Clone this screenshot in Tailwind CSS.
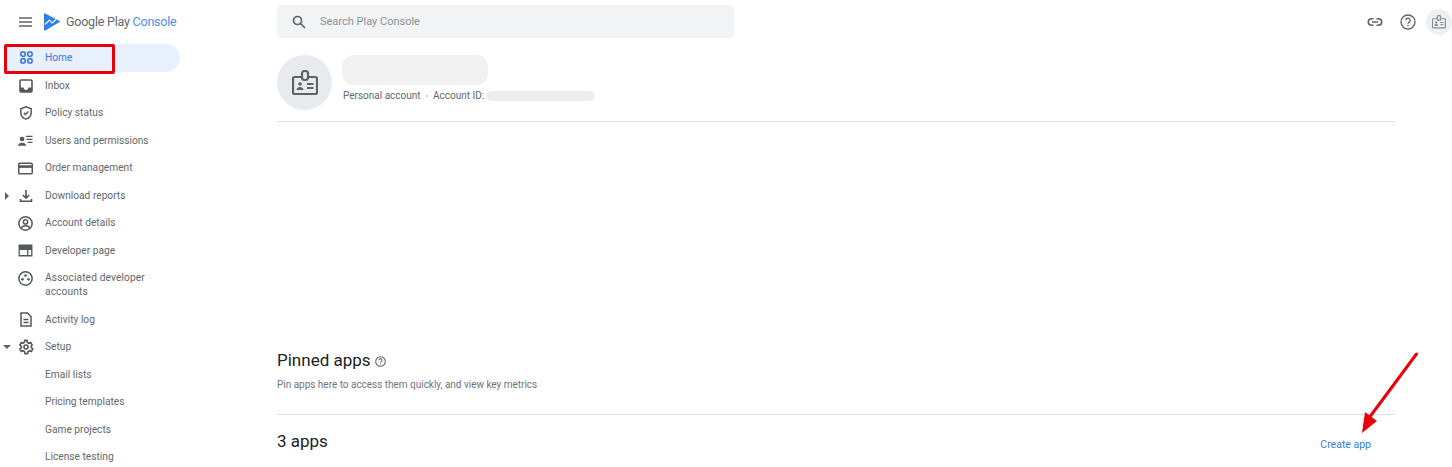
<!DOCTYPE html>
<html lang="en">
  <head>
    <meta charset="UTF-8" />
    <title>Google Play Console</title>
    <script src="https://cdn.jsdelivr.net/npm/@tailwindcss/browser@4"></script>
  </head>
  <body class="relative h-[467px] w-[1452px] overflow-hidden bg-white font-['Roboto',sans-serif] text-[#63676b]">
    <div class="flex h-full">
      <!-- sidebar -->
      <aside class="w-[277px] shrink-0">
        <div class="flex h-[44px] items-center pl-[19px]">
          <svg class="h-[12px] w-[13px]" viewBox="0 0 13 12" fill="none" stroke="#5f6368" stroke-width="1.300"><path d="M0 2h13M0 6h13M0 10h13" /></svg>
          <svg class="ml-[12px] h-[18px] w-[17px]" viewBox="0 0 17 18"><path d="M1.200.4 16.500 8.600 1.200 17.400a.8.800 0 0 1-1.200-.7V1.100A.8.800 0 0 1 1.200.4Z" fill="#2f80e8" /><path d="M1 11.500 5.500 7l2.500 3 4-3.500" fill="none" stroke="#fff" stroke-width="1.100" /></svg>
          <span class="ml-[5px] text-[12.5px] tracking-[-0.22px] whitespace-nowrap">Google Play <span class="text-[#4a8fe8]">Console</span></span>
        </div>
        <nav class="w-[180px] text-[10.2px]">
          <a class="ml-[5px] flex h-[27.75px] items-center rounded-r-full bg-[#e8f0fe] pl-[15px] text-[#3b78d8]">
            <svg class="h-[13px] w-[13px]" viewBox="0 0 14 14" fill="none" stroke="#2f6fd6" stroke-width="1.700"><rect x="1" y="1" width="4.600" height="4.600" rx="1.600" /><rect x="8.400" y="1" width="4.600" height="4.600" rx="1.600" /><rect x="1" y="8.400" width="4.600" height="4.600" rx="1.600" /><rect x="8.400" y="8.400" width="4.600" height="4.600" rx="1.600" /></svg>
            <span class="ml-[12px]">Home</span>
          </a>
          <a class="flex h-[27.5px] items-center pl-[19px]">
            <svg class="h-[14px] w-[14px]" viewBox="0 0 14 14" fill="none" stroke="#54585c" stroke-width="1.600"><rect x="1" y="1" width="12" height="12" rx="1.200" /><path d="M1 8.500h3.500a2.500 2.500 0 0 0 5 0H13V13H1Z" fill="#54585c" stroke="none" /></svg>
            <span class="ml-[12px]">Inbox</span>
          </a>
          <a class="flex h-[27.5px] items-center pl-[19px]">
            <svg class="h-[14px] w-[14px]" viewBox="0 0 14 14" fill="none" stroke="#54585c" stroke-width="1.500"><path d="M7 .800 1.800 2.700v3.700c0 3.100 2.200 5.800 5.200 6.700 3-.9 5.200-3.600 5.200-6.700V2.700Z" /><path d="m4.800 6.900 1.600 1.600 2.900-3" /></svg>
            <span class="ml-[12px]">Policy status</span>
          </a>
          <a class="flex h-[27.5px] items-center pl-[18px]">
            <svg class="h-[15px] w-[15px]" viewBox="0 0 14 14" fill="#54585c"><circle cx="3.800" cy="5.600" r="2.200" /><path d="M0 12c0-2 2-3 3.800-3s3.800 1 3.800 3Z" /><path d="M7.500 2.500h6v1.300h-6zM8 5.300h5.500v1.300H8zM9 8.100h4.500v1.300H9z" /></svg>
            <span class="ml-[12px]">Users and permissions</span>
          </a>
          <a class="flex h-[27.5px] items-center pl-[18px]">
            <svg class="h-[15px] w-[15px]" viewBox="0 0 14 14" fill="none" stroke="#54585c" stroke-width="1.400"><rect x=".7" y="2" width="12.600" height="10" rx="1" /><path d="M.7 5.200h12.600" stroke-width="2.400" /></svg>
            <span class="ml-[12px]">Order management</span>
          </a>
          <a class="relative flex h-[27.5px] items-center pl-[19px]">
            <span class="absolute top-[10px] left-[5px] h-0 w-0 border-y-[4px] border-l-[4px] border-y-transparent border-l-[#5f6368]"></span>
            <svg class="h-[14px] w-[14px]" viewBox="0 0 14 14" fill="none" stroke="#54585c" stroke-width="1.600"><path d="M7 1v8M3.800 6 7 9.200 10.200 6M1.500 10v2.300h11V10" /></svg>
            <span class="ml-[12px]">Download reports</span>
          </a>
          <a class="flex h-[27.5px] items-center pl-[18px]">
            <svg class="h-[15px] w-[15px]" viewBox="0 0 14 14" fill="none" stroke="#54585c" stroke-width="1.400"><circle cx="7" cy="7" r="6.200" /><circle cx="7" cy="5.500" r="2" /><path d="M3 11c1-1.500 2.500-2 4-2s3 .5 4 2" /></svg>
            <span class="ml-[12px]">Account details</span>
          </a>
          <a class="flex h-[27.5px] items-center pl-[18px]">
            <svg class="h-[15px] w-[15px]" viewBox="0 0 14 14" fill="#54585c"><path fill-rule="evenodd" d="M.5 1.500h13v11H.5ZM1.700 6.500v4.800h6.800V6.500Zm8 0v4.800h2.600V6.500Z" /></svg>
            <span class="ml-[12px]">Developer page</span>
          </a>
          <a class="flex h-[41.5px] items-start pt-[7px] pl-[18px] leading-[14px]">
            <svg class="h-[15px] w-[15px]" viewBox="0 0 14 14" fill="none" stroke="#54585c" stroke-width="1.400"><circle cx="7" cy="7" r="6.200" /><circle cx="7" cy="4.200" r="1.200" fill="#54585c" stroke="none" /><circle cx="4.200" cy="7.800" r="1.200" fill="#54585c" stroke="none" /><circle cx="9.800" cy="7.800" r="1.200" fill="#54585c" stroke="none" /></svg>
            <span class="ml-[12px] w-[110px] tracking-[0.12px]">Associated developer accounts</span>
          </a>
          <a class="flex h-[27.5px] items-center pl-[19px]">
            <svg class="h-[15px] w-[14px]" viewBox="0 0 14 15" fill="none" stroke="#54585c" stroke-width="1.500"><path d="M2 1h6.500L12 4.500V14H2Z" /><path d="M4.500 7.500h5M4.500 10.500h5" /></svg>
            <span class="ml-[12px]">Activity log</span>
          </a>
          <a class="relative flex h-[27.5px] items-center pl-[18px]">
            <span class="absolute top-[12px] left-[3px] h-0 w-0 border-x-[4px] border-t-[4px] border-x-transparent border-t-[#5f6368]"></span>
            <svg class="h-[16px] w-[16px]" viewBox="0 0 24 24" fill="none" stroke="#54585c" stroke-width="2.400"><circle cx="12" cy="12" r="3" /><path d="m10 2-.5 3-2.500 1.400L5 5.300 2.800 9l2.300 1.900v2.200L2.800 15 5 18.700l2.900-1.100 2.100 1.400.500 3h4l.500-3 2.100-1.400 2.900 1.100 2.200-3.700-2.300-1.900v-2.200L21.200 9 19 5.300l-2.900 1.100L14 5l-.5-3Z" /></svg>
            <span class="ml-[11px]">Setup</span>
          </a>
          <a class="flex h-[27.5px] items-center pl-[45px]">Email lists</a>
          <a class="flex h-[27.5px] items-center pl-[45px]">Pricing templates</a>
          <a class="flex h-[27.5px] items-center pl-[45px]">Game projects</a>
          <a class="flex h-[27.5px] items-center pl-[45px]">License testing</a>
        </nav>
      </aside>

      <!-- main column -->
      <main class="min-w-0 flex-1">
        <header class="flex h-[44px] items-start pt-[5px]">
          <div class="flex h-[33px] w-[457px] items-center rounded-[4px] bg-[#f1f3f4] pt-[2px] pl-[15px]">
            <svg class="-mt-[1px] h-[14px] w-[14px]" viewBox="0 0 14 14" fill="none" stroke="#5f6368" stroke-width="1.700"><circle cx="5.500" cy="5.500" r="4" /><path d="m8.500 8.500 4.500 4.500" /></svg>
            <span class="ml-[14px] text-[11px] text-[#8d9195]">Search Play Console</span>
          </div>
          <div class="ml-auto flex h-[33px] items-center">
            <svg class="h-[16px] w-[16px]" viewBox="0 0 16 16" fill="none" stroke="#5f6368" stroke-width="1.600"><path d="M6.500 4.800H4.500a3.200 3.200 0 0 0 0 6.400h2M9.500 4.800h2a3.200 3.200 0 0 1 0 6.400h-2M5 8h6" /></svg>
            <svg class="ml-[17px] h-[16px] w-[16px]" viewBox="0 0 16 16" fill="none" stroke="#5f6368" stroke-width="1.300"><circle cx="8" cy="8" r="7" /><path d="M5.800 6.300a2.200 2.200 0 1 1 3.400 1.800c-.8.500-1.200.9-1.200 1.700" /><path d="M8 11v1.300" /></svg>
            <div class="ml-[10px] flex h-[26px] w-[26px] items-center justify-center rounded-full bg-[#eeeff1]">
              <svg class="h-[14px] w-[14px]" viewBox="0 0 26 26" fill="none" stroke="#8a8e92" stroke-width="2.200"><use href="#badge" /></svg>
            </div>
          </div>
        </header>

        <div class="mr-[56px]">
          <section class="flex h-[78px] border-b border-[#e0e0e0] pt-[11px]">
            <div class="flex h-[55px] w-[55px] items-center justify-center rounded-full bg-[#e8eaed]">
              <svg class="h-[26px] w-[26px]" viewBox="0 0 26 26" fill="none" stroke="#5f6368" stroke-width="2.200">
                <g id="badge">
                  <rect x="1" y="7" width="24" height="17" rx="1.500" />
                  <rect x="10" y="1" width="6" height="9" rx="2.500" fill="#e8eaed" />
                  <circle cx="8" cy="14" r="1.800" fill="#5f6368" stroke="none" />
                  <path d="M4.500 20c0-2 1.700-3 3.500-3s3.500 1 3.500 3Z" fill="#5f6368" stroke="none" />
                  <path d="M15 14h6.500M15 18h6.500" stroke-width="1.800" />
                </g>
              </svg>
            </div>
            <div class="ml-[10px]">
              <div class="h-[30px] w-[146px] rounded-[12px] bg-[#f1f1f1]"></div>
              <div class="mt-[5px] flex h-[11px] items-center pl-[1px] text-[10px] whitespace-nowrap">
                <span>Personal account</span>
                <span class="mr-[5.500px] ml-[5px] h-[2px] w-[2px] rounded-full bg-[#bdc1c6]"></span>
                <span>Account ID:</span>
                <span class="ml-[2px] h-[10px] w-[109px] rounded-full bg-[#eeeeee]"></span>
              </div>
            </div>
          </section>

          <section class="h-[292.500px] border-b border-[#e0e0e0] pt-[228px]">
            <div class="flex h-[22px] items-center">
              <h2 class="text-[17px] text-[#202124]">Pinned apps</h2>
              <svg class="ml-[4px] h-[11px] w-[11px]" viewBox="0 0 16 16" fill="none" stroke="#5f6368" stroke-width="1.500"><circle cx="8" cy="8" r="7" /><path d="M5.800 6.300a2.200 2.200 0 1 1 3.400 1.800c-.8.500-1.200.9-1.200 1.700M8 11v1.300" /></svg>
            </div>
            <p class="mt-[6px] text-[10px] tracking-[-0.02px] leading-[13px] text-[#70747a]">Pin apps here to access them quickly, and view key metrics</p>
          </section>

          <section class="flex items-start justify-between pt-[15px]">
            <h2 class="text-[17px] leading-[22px] text-[#202124]">3 apps</h2>
            <a class="mt-[8px] mr-[25px] text-[10.5px] leading-[13px] text-[#2f7de1]">Create app</a>
          </section>
        </div>
      </main>
    </div>

    <!-- annotations drawn over the screenshot -->
    <div class="absolute top-[44px] left-[4px] h-[30px] w-[111px] rounded-[2px] border-[3px] border-[#e8000b]"></div>
    <svg class="absolute top-[350px] left-[1355px] h-[90px] w-[70px]" viewBox="0 0 70 90">
      <path d="M61.500 4 14 68" fill="none" stroke="#e8000b" stroke-width="3" stroke-linecap="round" />
      <path d="M7 83 10 62 22 71Z" fill="#e8000b" />
    </svg>
  </body>
</html>
